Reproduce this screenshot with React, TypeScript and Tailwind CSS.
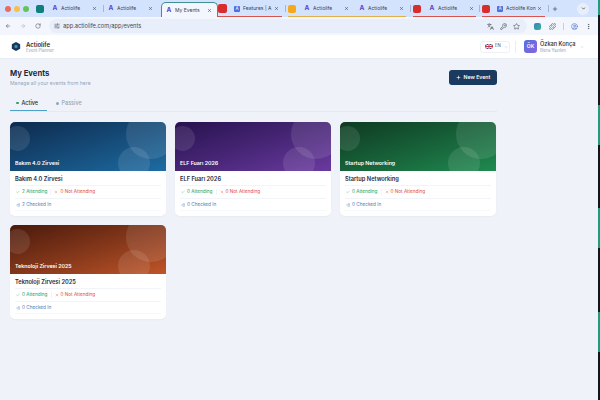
import React from "react";
import { ArrowLeft, ArrowRight, RotateCw, SlidersHorizontal, X, Plus, ChevronDown, Languages, KeyRound, Star, Puzzle, CircleUser, EllipsisVertical, Check, LogIn } from "lucide-react";

function Fav({ kind }: { kind: "a" | "b" }) {
  return kind === "a" ? (
    <span className="w-[6px] h-[7px] text-[6.5px] leading-[7px] font-bold text-[#5b45c8] text-center shrink-0">A</span>
  ) : (
    <span className="w-[6px] h-[6px] rounded-[1px] bg-[#4f6fdc] text-white text-[4.5px] leading-[6px] text-center shrink-0">A</span>
  );
}

function Tab({ title, kind, w, ml }: { title: string; kind: "a" | "b"; w: string; ml: string }) {
  return (
    <div className={`flex items-center shrink-0 ${w} ${ml}`}>
      <Fav kind={kind} />
      <span className="ml-[3px] w-[31px] text-[5px] leading-[7px] text-[#3c4150] whitespace-nowrap overflow-hidden shrink-0">{title}</span>
      <X className="w-[5px] h-[5px] text-[#3c4150] shrink-0" strokeWidth={2.5} />
    </div>
  );
}

function Sep({ ml }: { ml: string }) {
  return <span className={`w-px h-[7px] bg-[#a9b6cf] shrink-0 ${ml}`} />;
}

function Browser() {
  return (
    <div className="bg-[#d3e3fd] shrink-0">
      <div className="flex items-center h-[17px] pl-[5px]">
        <span className="w-[6px] h-[6px] rounded-full bg-[#ec6a5e] shrink-0" />
        <span className="w-[6px] h-[6px] rounded-full bg-[#f4bf4f] ml-[3px] shrink-0" />
        <span className="w-[6px] h-[6px] rounded-full bg-[#61c554] ml-[3px] shrink-0" />
        <span className="w-[8px] h-[8px] rounded-[2px] bg-[#0f7f7c] ml-[7px] shrink-0" />
        <Tab title="Actiolife" kind="a" w="w-[51px]" ml="ml-[8px]" />
        <Sep ml="ml-0" />
        <Tab title="Actiolife" kind="a" w="w-[53px]" ml="ml-[4px]" />
        <div className="flex items-center shrink-0 w-[57px] h-[15px] mt-[2px] pl-[4px] bg-[#f3f6fd] rounded-t-[5px] border border-b-0 border-[#3f8f95]">
          <Fav kind="a" />
          <span className="ml-[3px] w-[32px] text-[5px] leading-[7px] text-[#3c4150] whitespace-nowrap overflow-hidden shrink-0">My Events</span>
          <X className="w-[5px] h-[5px] text-[#3c4150] shrink-0" strokeWidth={2.5} />
        </div>
        <div className="flex items-center shrink-0 w-[64px] h-[15px] mt-[1px] border-b border-[#d9534f]">
          <span className="w-[9px] h-[9px] rounded-[2px] bg-[#d92d2d] shrink-0" />
          <Tab title="Features | A" kind="b" w="w-[46px]" ml="ml-[7px]" />
        </div>
        <Sep ml="ml-[3px]" />
        <div className="flex items-center shrink-0 w-[118px] h-[15px] mt-[1px] ml-[2px] border-b border-[#e2b04a]">
          <span className="w-[8px] h-[8px] rounded-[2px] bg-[#f6a81c] shrink-0" />
          <Tab title="Actiolife" kind="a" w="w-[55px]" ml="ml-[8px]" />
          <Tab title="Actiolife" kind="a" w="w-[46px]" ml="ml-0" />
        </div>
        <Sep ml="ml-[4px]" />
        <div className="flex items-center shrink-0 w-[63px] h-[15px] mt-[1px] ml-[2px] border-b border-[#d9534f]">
          <span className="w-[8px] h-[8px] rounded-[2px] bg-[#d92d2d] shrink-0" />
          <Tab title="Actiolife" kind="a" w="w-[46px]" ml="ml-[8px]" />
        </div>
        <Sep ml="ml-[3px]" />
        <div className="flex items-center shrink-0 w-[63px] h-[15px] mt-[1px] ml-[2px] border-b border-[#d9534f]">
          <span className="w-[8px] h-[8px] rounded-[2px] bg-[#d92d2d] shrink-0" />
          <Tab title="Actiolife Kon" kind="b" w="w-[46px]" ml="ml-[7px]" />
        </div>
        <Sep ml="ml-[3px]" />
        <Plus className="w-[6px] h-[6px] text-[#3c4150] ml-[3px] shrink-0" strokeWidth={2.5} />
        <span className="ml-auto mr-[9px] w-[12px] h-[12px] rounded-full bg-[#e8effb] flex items-center justify-center shrink-0">
          <ChevronDown className="w-[5px] h-[5px] text-[#222]" strokeWidth={3} />
        </span>
      </div>
      <div className="flex items-center h-[18px] bg-[#f3f6fd] pl-[5px]">
        <ArrowLeft className="w-[6px] h-[6px] text-[#474b55] shrink-0" />
        <ArrowRight className="w-[6px] h-[6px] text-[#a5a9b2] ml-[9px] shrink-0" />
        <RotateCw className="w-[6px] h-[6px] text-[#474b55] ml-[9px] shrink-0" />
        <div className="flex items-center ml-[8px] h-[14px] w-[478px] rounded-full bg-[#e9effa] shrink-0">
          <SlidersHorizontal className="w-[6px] h-[6px] text-[#474b55] ml-[5px]" />
          <span className="text-[5.7px] text-[#444a56] ml-[3px]">app.actiolife.com/app/events</span>
          <Languages className="w-[7px] h-[7px] text-[#474b55] ml-auto" />
          <KeyRound className="w-[7px] h-[7px] text-[#474b55] ml-[6px]" />
          <Star className="w-[7px] h-[7px] text-[#474b55] ml-[6px] mr-[7px]" />
        </div>
        <span className="w-[7px] h-[7px] rounded-[2px] bg-gradient-to-br from-[#3a80c9] to-[#3bb38a] ml-[7px] shrink-0" />
        <Puzzle className="w-[7px] h-[7px] text-[#474b55] ml-[8px] shrink-0" />
        <span className="w-px h-[7px] bg-[#c9cdd6] ml-[7px] shrink-0" />
        <CircleUser className="w-[7px] h-[7px] text-[#3f6fd8] ml-[7px] shrink-0" />
        <EllipsisVertical className="w-[7px] h-[7px] text-[#474b55] ml-[7px] shrink-0" />
      </div>
    </div>
  );
}

function Header() {
  return (
    <div className="flex items-center h-[24px] bg-white border-b border-[#e8ecf3] pl-[11px] pr-[14px] shrink-0">
      <svg viewBox="0 0 24 24" className="w-[10px] h-[11px]">
        <path d="M12 1 22 6.500v11L12 23 2 17.500v-11z" fill="#16365c" />
        <circle cx="12" cy="12" r="4" fill="#3f8fb0" />
      </svg>
      <div className="ml-[5px] flex flex-col mt-[1px]">
        <span className="text-[6px] leading-[7px] font-semibold text-[#1e293b]">Actiolife</span>
        <span className="text-[4.300px] leading-[5px] text-[#94a3b8]">Event Planner</span>
      </div>
      <div className="ml-auto flex items-center w-[30px] h-[12px] pl-[4px] gap-[2px] border border-[#edf0f5] rounded-[3px]">
        <svg viewBox="0 0 16 10" className="w-[8px] h-[5px]">
          <rect width="16" height="10" fill="#3a4a8c" />
          <path d="M0 0 16 10M16 0 0 10" stroke="#fff" strokeWidth="2" />
          <path d="M8 0v10M0 5h16" stroke="#fff" strokeWidth="3.500" />
          <path d="M8 0v10M0 5h16" stroke="#c8364a" strokeWidth="2" />
        </svg>
        <span className="text-[4.300px] text-[#475569]">EN</span>
        <ChevronDown className="w-[4px] h-[4px] text-[#94a3b8] ml-[1px]" />
      </div>
      <span className="w-px h-[12px] bg-[#e8ecf3] ml-[5px]" />
      <span className="ml-[8px] w-[13px] h-[13px] rounded-[3px] bg-gradient-to-br from-[#4f6fe0] to-[#8a62e0] text-white text-[5px] font-semibold flex items-center justify-center">ÖK</span>
      <div className="ml-[3px] flex flex-col w-[37px]">
        <span className="text-[5.600px] leading-[7px] font-medium text-[#1e293b] whitespace-nowrap">Özkan Konça</span>
        <span className="text-[4.300px] leading-[5px] text-[#94a3b8] whitespace-nowrap">Biera Yazılım</span>
      </div>
      <ChevronDown className="w-[4px] h-[4px] text-[#94a3b8] ml-[3px]" />
    </div>
  );
}

type Ev = { name: string; a: number; c: number; bg: string };

function Card({ e }: { e: Ev }) {
  return (
    <div className="bg-white rounded-[5px] overflow-hidden shadow-[0_1px_2px_rgba(15,23,42,0.04)]">
      <div className={`relative h-[49px] overflow-hidden bg-gradient-to-br ${e.bg}`}>
        <span className="absolute left-[-5px] top-[4px] w-[25px] h-[25px] rounded-full bg-white/10" />
        <span className="absolute right-[-10px] top-[-13px] w-[50px] h-[50px] rounded-full bg-white/10" />
        <span className="absolute right-[16px] top-[25px] w-[32px] h-[32px] rounded-full bg-white/10" />
        <span className="absolute left-[5px] bottom-[4px] text-[5.300px] leading-[8px] font-semibold text-white whitespace-nowrap">{e.name}</span>
      </div>
      <div className="px-[5px] pb-[5px]">
        <div className="h-[15px] flex items-center pt-[3px] text-[5.700px] font-semibold text-[#1e293b] border-b border-[#f1f4f8] whitespace-nowrap">{e.name}</div>
        <div className="flex items-center h-[13px] border-b border-[#f1f4f8] text-[4.700px]">
          <Check className="w-[4px] h-[4px] text-[#22a05a] ml-[1px]" />
          <span className="text-[#22a05a] ml-[2px] whitespace-nowrap">{e.a} Attending</span>
          <span className="w-px h-[6px] bg-[#f1f4f8] ml-[3px]" />
          <X className="w-[4px] h-[4px] text-[#e04848] ml-[3px]" />
          <span className="text-[#e04848] ml-[2px] whitespace-nowrap">0 Not Attending</span>
        </div>
        <div className="flex items-center h-[12px] border-b border-[#f6f8fb] text-[4.700px] text-[#4a7eb5]">
          <LogIn className="w-[4px] h-[4px] ml-[1px]" />
          <span className="ml-[2px]">{e.c} Checked In</span>
        </div>
      </div>
    </div>
  );
}

const events: Ev[] = [
  { name: "Bakım 4.0 Zirvesi", a: 2, c: 2, bg: "from-[#0d2b4e] to-[#1d6ca3]" },
  { name: "ELF Fuarı 2026", a: 0, c: 0, bg: "from-[#27124f] to-[#6a3a9f]" },
  { name: "Startup Networking", a: 0, c: 0, bg: "from-[#0e3a22] to-[#1f8a50]" },
  { name: "Teknoloji Zirvesi 2025", a: 0, c: 0, bg: "from-[#4a1a0c] to-[#bf5528]" },
];

export default function App() {
  return (
    <div className="w-[600px] h-[400px] overflow-hidden bg-white flex font-['Inter','Liberation_Sans',sans-serif]">
      <div className="w-[598px] h-full flex flex-col shrink-0">
        <Browser />
        <Header />
        <main className="flex-1 bg-[#eff3f9] pl-[10px] pr-[101px] pt-[9px]">
          <div className="flex items-start justify-between">
            <div>
              <h1 className="text-[7.700px] leading-[12px] font-bold text-[#1e293b]">My Events</h1>
              <p className="text-[5.100px] leading-[7px] text-[#94a3b8]">Manage all your events from here</p>
            </div>
            <button className="flex items-center h-[15px] w-[48px] justify-center gap-[3px] rounded-[3px] bg-[#1a3a5f] text-white text-[5.200px] font-semibold mt-[2px]">
              <Plus className="w-[5px] h-[5px]" strokeWidth={3} />
              New Event
            </button>
          </div>
          <div className="flex items-center mt-[9px] h-[16px] border-b border-[#e5e9f0] text-[5.500px]">
            <div className="flex items-center gap-[3px] h-full w-[37px] pl-[6px] border-b border-[#4ea1c9] text-[#1e293b] font-medium">
              <span className="w-[2.500px] h-[2.500px] rounded-full bg-[#2f9e63]" />Active
            </div>
            <div className="flex items-center gap-[3px] ml-[9px] text-[#94a3b8] font-medium">
              <span className="w-[2.500px] h-[2.500px] rounded-full bg-[#94a3b8]" />Passive
            </div>
          </div>
          <div className="grid grid-cols-[repeat(3,156px)] gap-[9px] mt-[10px]">
            {events.map((e) => <Card key={e.name} e={e} />)}
          </div>
        </main>
      </div>
      <div className="flex-1 flex flex-col">
        <span className="h-[15px] bg-[#1f9c80]" />
        <span className="h-[90px] bg-[#12151c]" />
        <span className="h-[40px] bg-[#1f9c80]" />
        <span className="h-[63px] bg-[#12151c]" />
        <span className="h-[40px] bg-[#1f9c80]" />
        <span className="h-[64px] bg-[#12151c]" />
        <span className="h-[40px] bg-[#1f9c80]" />
        <span className="h-[48px] bg-[#12151c]" />
      </div>
    </div>
  );
}
